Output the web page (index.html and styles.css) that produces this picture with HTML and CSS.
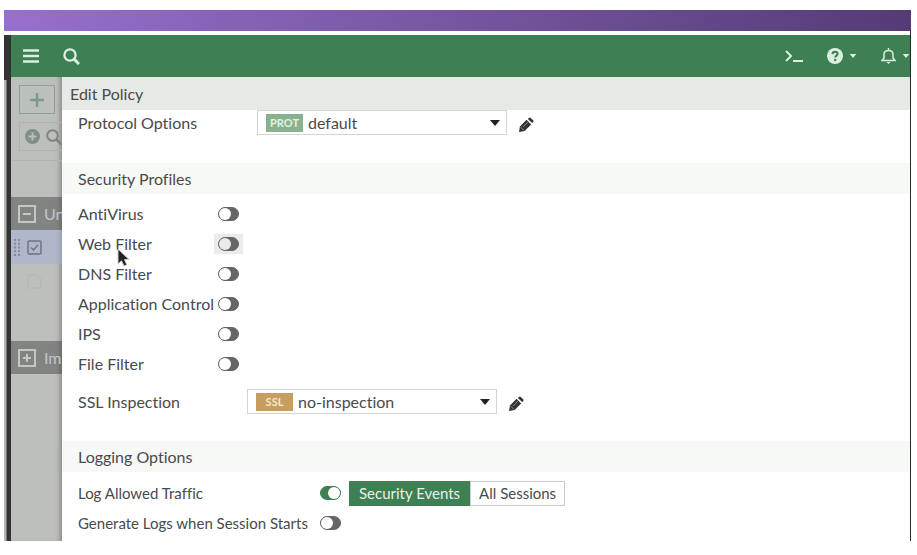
FILE: index.html
```html
<!DOCTYPE html>
<html lang="en">
<head>
  <meta charset="UTF-8" />
  <meta name="viewport" content="width=device-width, initial-scale=1.0"/>
  <title>Edit Policy</title>
  <link rel="stylesheet" href="styles.css">
</head>
<body>

  <svg class="sprite" aria-hidden="true">
    <symbol id="pencil" viewBox="0 0 16 16">
      <path d="M0 16l1-6 7-7 5 5-7 7z"/>
      <path d="M9.500 2l1-1q1-1 2 0l2.500 2.500q1 1 0 2l-1 1z"/>
      <path d="M2 11l3 3M4.500 10.500l5-5" fill="none" stroke="#999" stroke-width="1"/>
    </symbol>
    <symbol id="caret" viewBox="0 0 10 6">
      <path d="M0 0h10L5 6z"/>
    </symbol>
  </svg>

  <div class="banner"></div>

  <div class="window">
    <div class="edge"></div>
    <div class="app">
      <header class="topbar">
        <button class="icon-btn menu" aria-label="Menu">
          <svg width="16" height="14" viewBox="0 0 16 14"><path d="M0 1.5h16M0 7h16M0 12.5h16" stroke="currentColor" stroke-width="2.4"/></svg>
        </button>
        <button class="icon-btn" aria-label="Search">
          <svg width="17" height="17" viewBox="0 0 17 17" fill="none" stroke="currentColor"><circle cx="7" cy="7" r="5.6" stroke-width="2.3"/><path d="M11 11l5 5" stroke-width="3"/></svg>
        </button>
        <span class="spacer"></span>
        <button class="icon-btn cli" aria-label="CLI console">
          <svg width="18" height="14" viewBox="0 0 18 14" fill="none" stroke="currentColor" stroke-width="2"><path d="M1 2l5 5-5 5M8 12h10"/></svg>
        </button>
        <button class="icon-btn help" aria-label="Help">
          <svg width="16" height="16" viewBox="0 0 16 16"><circle cx="8" cy="8" r="8" fill="currentColor"/><path d="M5.4 6.2C5.6 4.4 6.6 3.8 8 3.8s2.6.8 2.6 2.2C10.6 7.6 8.2 7.6 8.2 9.6" fill="none" stroke="#3f7f54" stroke-width="2"/><circle cx="8.2" cy="12" r="1.2" fill="#3f7f54"/></svg>
          <svg class="caret" width="8" height="4"><use href="#caret"/></svg>
        </button>
        <button class="icon-btn bell" aria-label="Notifications">
          <svg width="15" height="16" viewBox="0 0 15 16"><path d="M1 12.5h13l-2-2.5V6.500C12 4 10 2.400 7.500 2.400S3 4 3 6.500V10zM7.500 0v2.500" fill="none" stroke="currentColor" stroke-width="1.500"/><path d="M5.500 14h4l-2 2z" fill="currentColor"/></svg>
          <svg class="caret" width="8" height="4"><use href="#caret"/></svg>
        </button>
      </header>

      <div class="content">
        <aside class="list">
          <button class="add" aria-label="Create new">
            <svg width="14" height="14" viewBox="0 0 14 14"><path d="M7 0v14M0 7h14" stroke="currentColor" stroke-width="2.4"/></svg>
          </button>
          <div class="filter">
            <svg width="15" height="15" viewBox="0 0 15 15"><circle cx="7.5" cy="7.5" r="7.5" fill="#838d88"/><path d="M7.5 3.500v8M3.500 7.500h8" stroke="#bcbfbb" stroke-width="2"/></svg>
            <svg width="16" height="16" viewBox="0 0 16 16" fill="none" stroke="#7f8481"><circle cx="6.5" cy="6.5" r="5.3" stroke-width="2"/><path d="M10.5 10.5l5 5" stroke-width="2.5"/></svg>
          </div>
          <div class="columns"></div>
          <div class="group">
            <svg width="18" height="18" viewBox="0 0 18 18" fill="none" stroke="currentColor" stroke-width="2"><path d="M1 1h16v16H1zM5 9h8"/></svg>
            <span>Un</span>
          </div>
          <div class="item selected">
            <svg width="6" height="17" viewBox="0 0 6 17"><path d="M1 0v17M5 0v17" stroke="#858ba0" stroke-width="2" stroke-dasharray="2 1.75"/></svg>
            <svg width="15" height="15" viewBox="0 0 15 15" fill="none" stroke="#70747e" stroke-width="1.5"><rect x="1" y="1" width="13" height="13" rx="1"/><path d="M4 7.5l2.500 2.500L11 5"/></svg>
          </div>
          <div class="item">
            <svg class="ghost" width="15" height="15" viewBox="0 0 15 15" fill="none" stroke="#b2b5b1"><path d="M1 1h9l4 4v9H1z"/></svg>
          </div>
          <div class="gap"></div>
          <div class="group">
            <svg width="18" height="18" viewBox="0 0 18 18" fill="none" stroke="currentColor" stroke-width="2"><path d="M1 1h16v16H1zM5 9h8M9 5v8"/></svg>
            <span>Im</span>
          </div>
        </aside>

        <main class="panel">
          <h1>Edit Policy</h1>

          <div class="field proto">
            <label for="protocol">Protocol Options</label>
            <div class="picker">
              <span class="tag">PROT</span>
              <select id="protocol"><option>default</option></select>
              <svg class="arrow" width="10" height="6"><use href="#caret"/></svg>
            </div>
            <button class="edit" aria-label="Edit protocol options"><svg width="15" height="15"><use href="#pencil"/></svg></button>
          </div>

          <h2>Security Profiles</h2>
          <div class="rows profiles">
            <div class="row"><label for="av">AntiVirus</label><span class="switch"><input type="checkbox" id="av"></span></div>
            <div class="row">
              <label for="web">Web Filter</label><span class="switch hover"><input type="checkbox" id="web"></span>
              <svg class="pointer" width="14" height="19" viewBox="0 0 14 19"><path d="M1 1v15l3.500-3.200L7 18l2.800-1.200L7.500 11.500H12z" fill="#222" stroke="#ccc" stroke-width="1"/></svg>
            </div>
            <div class="row"><label for="dns">DNS Filter</label><span class="switch"><input type="checkbox" id="dns"></span></div>
            <div class="row"><label for="app">Application Control</label><span class="switch"><input type="checkbox" id="app"></span></div>
            <div class="row"><label for="ips">IPS</label><span class="switch"><input type="checkbox" id="ips"></span></div>
            <div class="row"><label for="file">File Filter</label><span class="switch"><input type="checkbox" id="file"></span></div>
          </div>

          <div class="field ssl">
            <label for="inspection">SSL Inspection</label>
            <div class="picker">
              <span class="tag">SSL</span>
              <select id="inspection"><option>no-inspection</option></select>
              <svg class="arrow" width="10" height="6"><use href="#caret"/></svg>
            </div>
            <button class="edit" aria-label="Edit SSL inspection"><svg width="15" height="15"><use href="#pencil"/></svg></button>
          </div>

          <h2>Logging Options</h2>
          <div class="rows logging">
            <div class="row">
              <label for="log">Log Allowed Traffic</label><span class="switch"><input type="checkbox" id="log" checked></span>
              <div class="segment">
                <button class="active">Security Events</button><button>All Sessions</button>
              </div>
            </div>
            <div class="row"><label for="gen">Generate Logs when Session Starts</label><span class="switch"><input type="checkbox" id="gen"></span></div>
          </div>
        </main>
      </div>
    </div>
  </div>

</body>
</html>
```
FILE: styles.css
```css
* {
  box-sizing: border-box;
}
body {
  margin: 10px 6px 14px 4px;
  background: #fff;
  color: #4a4a4a;
  font-family: Lato, sans-serif;
  font-size: 16px;
  font-variant-ligatures: none;
  line-height: 20px;
}
button, select {
  font: inherit;
  color: inherit;
  background: none;
  border: 0;
  padding: 0;
  cursor: pointer;
}
svg {
  display: block;
  flex: none;
}
.sprite {
  position: absolute;
  width: 0;
  height: 0;
}
.banner {
  height: 21px;
  background: linear-gradient(90deg, #9770cd, #553b76);
}
.window {
  display: flex;
  padding-top: 4px;
  border-right: 1px solid #2b2b2b;
}
.edge {
  width: 7px;
  border-top: 45px solid #333;
  background: linear-gradient(90deg, #b5b5b5 2px, #333 3px);
}
.app {
  flex: 1;
  min-width: 0;
}

/* top bar */
.topbar {
  display: flex;
  align-items: center;
  height: 42px;
  padding-left: 12px;
  background: #3f7f54;
  color: #dcf0e0;
  overflow: hidden;
}
.icon-btn {
  display: flex;
  align-items: center;
  gap: 6px;
}
.menu {
  margin-right: 24px;
}
.spacer {
  flex: 1;
}
.cli, .help {
  margin-right: 24px;
}
.caret, .arrow {
  fill: currentColor;
}

/* policy list behind the panel */
.content {
  display: flex;
}
.list {
  width: 51px;
  overflow: hidden;
  background: #bcbfbb;
  box-shadow: inset -5px 0 5px -3px #888;
}
.add {
  display: flex;
  align-items: center;
  justify-content: center;
  width: 36px;
  height: 29px;
  margin: 8px;
  border: 1px solid #86a395;
  color: #7b9a8a;
}
.filter {
  display: flex;
  align-items: center;
  gap: 6px;
  height: 29px;
  margin-left: 8px;
  padding-left: 5px;
  border: 1px solid #aeb3af;
  border-right: 0;
}
.columns {
  height: 37px;
  margin-top: 9px;
  border-top: 1px solid #b0b3af;
}
.group {
  display: flex;
  align-items: center;
  gap: 8px;
  height: 33px;
  padding-left: 7px;
  background: rgba(60, 60, 60, 0.45);
  color: #c4c6c4;
}
.group span {
  flex: 1;
  min-width: 0;
  overflow: hidden;
}
.item {
  display: flex;
  align-items: center;
  gap: 7px;
  height: 34px;
  padding-left: 3px;
}
.selected {
  background: rgba(165, 175, 220, 0.5);
}
.ghost {
  margin-left: 13px;
}
.gap {
  height: 43px;
}

/* edit panel */
.panel {
  flex: 1;
  min-width: 0;
  padding-bottom: 3px;
}
h1, h2 {
  margin: 0;
  font-size: 16px;
  font-weight: normal;
}
h1 {
  padding: 7px 8px 6px;
  background: #e7e9e6;
}
h2 {
  padding: 6px 16px 5px;
  background: #f7f9f7;
}
.field {
  display: flex;
  align-items: center;
  padding-left: 16px;
}
.proto {
  margin-bottom: 28px;
}
.proto label {
  width: 179px;
}
.ssl {
  margin: 10px 0 27px;
}
.ssl label {
  width: 169px;
}
.picker {
  display: flex;
  align-items: center;
  width: 250px;
  height: 25px;
  padding: 0 6px 0 8px;
  border: 1px solid #d4d4d4;
}
.tag {
  width: 37px;
  margin-right: 5px;
  background: #87b28d;
  color: #e3f0e4;
  font-size: 11px;
  font-weight: bold;
  line-height: 18px;
  text-align: center;
}
.ssl .tag {
  background: #c69e5d;
  color: #f5e8d0;
}
.picker select {
  flex: 1;
  appearance: none;
  outline: none;
}
.arrow {
  color: #222;
}
.edit {
  margin-left: 12px;
  padding-top: 3px;
  fill: #333;
}
.rows {
  padding: 5px 16px 0;
}
.row {
  position: relative;
  display: flex;
  align-items: center;
  height: 30px;
}
.row label {
  width: 136px;
  white-space: nowrap;
}
.logging {
  padding-top: 6px;
  font-size: 15px;
}
.logging label {
  width: 238px;
}
.switch {
  display: flex;
  padding: 3px 4px;
}
.hover {
  background: #ebebeb;
}
.switch input {
  appearance: none;
  width: 21px;
  height: 14px;
  margin: 0;
  border: 1px solid #666;
  border-radius: 7px;
  background: #666;
  cursor: pointer;
}
.switch input::before {
  content: "";
  display: block;
  width: 12px;
  height: 12px;
  border-radius: 6px;
  background: #fff;
}
.hover input::before {
  background: #ebebeb;
}
.switch input:checked {
  border-color: #3f7f54;
  background: #3f7f54;
}
.switch input:checked::before {
  margin-left: 7px;
}
.segment {
  display: flex;
  margin-left: 4px;
}
.segment button {
  height: 25px;
  padding: 0 8px;
  border: 1px solid #ccc;
}
.segment .active {
  padding: 0 9px;
  border-color: #3f7f54;
  background: #3f7f54;
  color: #e6f3e9;
}
.pointer {
  position: absolute;
  left: 39px;
  top: 19px;
  z-index: 1;
}
```
